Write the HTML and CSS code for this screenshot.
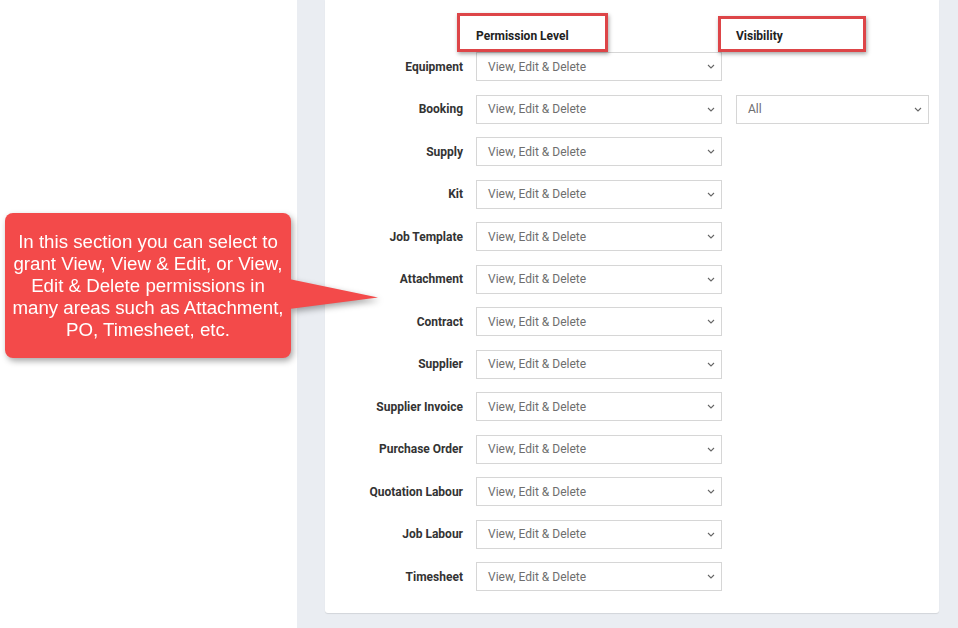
FILE: index.html
```html
<!DOCTYPE html>
<html lang="en">
  <head>
    <title>Permissions</title>
    <meta charset="UTF-8" />
    <meta name="viewport" content="width=device-width, initial-scale=1.0" />
    <link rel="stylesheet" href="styles.css">
  </head>
  <body>
    <div class="side"></div>

    <div class="panel">
      <div class="card">
        <div class="row head">
          <div></div>
          <div class="col-title">Permission Level<span class="mark mark-perm"></span></div>
          <div class="col-title">Visibility<span class="mark mark-vis"></span></div>
        </div>

        <div class="rows">
          <div class="row">
            <label>Equipment</label>
            <div class="select"><span>View, Edit &amp; Delete</span><svg viewBox="0 0 8 5"><path d="M1 1l3 3 3-3"/></svg></div>
          </div>
          <div class="row">
            <label>Booking</label>
            <div class="select"><span>View, Edit &amp; Delete</span><svg viewBox="0 0 8 5"><path d="M1 1l3 3 3-3"/></svg></div>
            <div class="select"><span>All</span><svg viewBox="0 0 8 5"><path d="M1 1l3 3 3-3"/></svg></div>
          </div>
          <div class="row">
            <label>Supply</label>
            <div class="select"><span>View, Edit &amp; Delete</span><svg viewBox="0 0 8 5"><path d="M1 1l3 3 3-3"/></svg></div>
          </div>
          <div class="row">
            <label>Kit</label>
            <div class="select"><span>View, Edit &amp; Delete</span><svg viewBox="0 0 8 5"><path d="M1 1l3 3 3-3"/></svg></div>
          </div>
          <div class="row">
            <label>Job Template</label>
            <div class="select"><span>View, Edit &amp; Delete</span><svg viewBox="0 0 8 5"><path d="M1 1l3 3 3-3"/></svg></div>
          </div>
          <div class="row">
            <label>Attachment</label>
            <div class="select"><span>View, Edit &amp; Delete</span><svg viewBox="0 0 8 5"><path d="M1 1l3 3 3-3"/></svg></div>
          </div>
          <div class="row">
            <label>Contract</label>
            <div class="select"><span>View, Edit &amp; Delete</span><svg viewBox="0 0 8 5"><path d="M1 1l3 3 3-3"/></svg></div>
          </div>
          <div class="row">
            <label>Supplier</label>
            <div class="select"><span>View, Edit &amp; Delete</span><svg viewBox="0 0 8 5"><path d="M1 1l3 3 3-3"/></svg></div>
          </div>
          <div class="row">
            <label>Supplier Invoice</label>
            <div class="select"><span>View, Edit &amp; Delete</span><svg viewBox="0 0 8 5"><path d="M1 1l3 3 3-3"/></svg></div>
          </div>
          <div class="row">
            <label>Purchase Order</label>
            <div class="select"><span>View, Edit &amp; Delete</span><svg viewBox="0 0 8 5"><path d="M1 1l3 3 3-3"/></svg></div>
          </div>
          <div class="row">
            <label>Quotation Labour</label>
            <div class="select"><span>View, Edit &amp; Delete</span><svg viewBox="0 0 8 5"><path d="M1 1l3 3 3-3"/></svg></div>
          </div>
          <div class="row">
            <label>Job Labour</label>
            <div class="select"><span>View, Edit &amp; Delete</span><svg viewBox="0 0 8 5"><path d="M1 1l3 3 3-3"/></svg></div>
          </div>
          <div class="row">
            <label>Timesheet</label>
            <div class="select"><span>View, Edit &amp; Delete</span><svg viewBox="0 0 8 5"><path d="M1 1l3 3 3-3"/></svg></div>
          </div>
        </div>
      </div>
    </div>

    <!-- Help callout pointing at the permission list -->
    <div class="callout">
      <p>In this section you can select to<br>grant View, View &amp; Edit, or View,<br>Edit &amp; Delete permissions in<br>many areas such as Attachment,<br>PO, Timesheet, etc.</p>
    </div>
  </body>
</html>
```

FILE: styles.css
```css
* {
  margin: 0;
  padding: 0;
  box-sizing: border-box;
}

body {
  font-family: Roboto, 'Liberation Sans', sans-serif;
  background: #fff;
  display: flex;
  height: 628px;
  overflow: hidden;
  position: relative;
}

.side {
  width: 297px;
  flex-shrink: 0;
  background: #fff;
}

.panel {
  flex: 1;
  background: #eaedf2;
  padding: 0 19px 15px 28px;
}

.card {
  background: #fff;
  height: 100%;
  padding-top: 26px;
  border-radius: 0 0 3px 3px;
  box-shadow: 0 1px 1px rgba(0, 0, 0, 0.1);
}

/* Label | permission | visibility */
.row {
  display: grid;
  grid-template-columns: 138px 246px 194px;
  column-gap: 13px;
  align-items: center;
}

.row > :nth-child(3) {
  margin-left: 1px;
}

.row.head {
  height: 20px;
  margin-bottom: 6px;
}

.col-title {
  position: relative;
  font-size: 12px;
  font-weight: 700;
  color: #222;
  line-height: 20px;
}

/* Red highlight frames around the column titles */
.mark {
  position: absolute;
  border: 3px solid #dd4548;
  box-shadow: 1px 2px 4px rgba(0, 0, 0, 0.35);
}

.mark-perm {
  top: -13px;
  left: -19px;
  width: 151px;
  height: 39px;
}

.mark-vis {
  top: -10px;
  left: -18px;
  width: 148px;
  height: 36px;
}

.rows {
  display: flex;
  flex-direction: column;
  gap: 13.5px;
}

.rows label {
  text-align: right;
  font-size: 12px;
  font-weight: 700;
  color: #333;
}

.select {
  height: 29px;
  border: 1px solid #d6d6d6;
  display: flex;
  align-items: center;
  justify-content: space-between;
  padding: 0 6px 0 11px;
  font-size: 12px;
  color: #6e6e6e;
}

.select svg {
  width: 8px;
  height: 5px;
  fill: none;
  stroke: #666;
  stroke-width: 1.1;
}

.callout {
  position: absolute;
  left: 5px;
  top: 213px;
  width: 286px;
  height: 145px;
  background: #f34a4a;
  border-radius: 8px;
  display: flex;
  align-items: center;
  justify-content: center;
  filter: drop-shadow(2px 3px 3px rgba(0, 0, 0, 0.35));
}

.callout::after {
  content: '';
  position: absolute;
  left: 284px;
  top: 66px;
  width: 89px;
  height: 30px;
  background: #f34a4a;
  clip-path: polygon(0 0, 100% 62%, 0 100%);
}

.callout p {
  font-family: 'Liberation Sans', Arial, sans-serif;
  font-size: 18.7px;
  line-height: 22px;
  color: #fff;
  text-align: center;
  white-space: nowrap;
}
```
